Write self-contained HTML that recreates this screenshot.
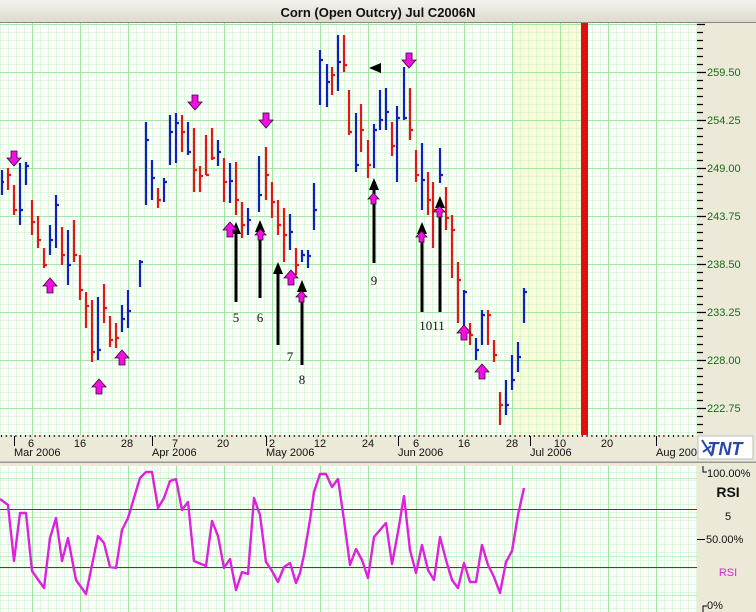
<!DOCTYPE html>
<html><head><meta charset="utf-8"><style>
html,body{margin:0;padding:0;background:#ece9d8;}
svg{display:block;font-family:"Liberation Sans",sans-serif;}
</style></head><body>
<svg width="756" height="612" viewBox="0 0 756 612" xmlns="http://www.w3.org/2000/svg">
<defs>
<linearGradient id="tb" x1="0" y1="0" x2="0" y2="1"><stop offset="0" stop-color="#f4f3ee"/><stop offset="1" stop-color="#dcd9cc"/></linearGradient>
<pattern id="minor" x="0" y="0" width="8" height="8" patternUnits="userSpaceOnUse"><path d="M0 0H8M0 0V8" stroke="#c4efc4" stroke-width="1" fill="none"/></pattern>
<pattern id="major" x="32.5" y="24.5" width="48" height="48" patternUnits="userSpaceOnUse"><path d="M0 0H48M0 0V48" stroke="#7fe07f" stroke-width="1" fill="none"/></pattern>
<pattern id="major2" x="32.5" y="517.5" width="48" height="39" patternUnits="userSpaceOnUse"><path d="M0 0H48M0 0V39" stroke="#7fe07f" stroke-width="1" fill="none"/></pattern>
<pattern id="ticks" x="1" y="0" width="4.8" height="3" patternUnits="userSpaceOnUse"><rect width="1" height="2" fill="#000"/></pattern>
</defs>
<!-- title -->
<rect x="0" y="0" width="756" height="23" fill="url(#tb)"/>
<line x1="0" y1="22.5" x2="756" y2="22.5" stroke="#888"/>
<text x="378" y="17" text-anchor="middle" font-size="13" font-weight="bold" fill="#111">Corn (Open Outcry) Jul C2006N</text>
<!-- main chart -->
<rect x="0" y="23" width="697" height="412" fill="#fafffa"/>
<rect x="513" y="23" width="69" height="412" fill="#f8fcd8"/>
<rect x="0" y="23" width="697" height="412" fill="url(#minor)"/>
<rect x="0" y="23" width="697" height="412" fill="url(#major)"/>
<rect x="581" y="23" width="7" height="412" fill="#e01010"/>
<!-- right axis -->
<rect x="697" y="23" width="59" height="412" fill="#ece9d8"/>
<g stroke="#000" stroke-width="1.2">
<path d="M697 24.5h8M697 32.5h6M697 40.5h6M697 48.5h6M697 56.5h6M697 64.5h6M697 72.5h9M697 80.5h6M697 88.5h6M697 96.5h6M697 104.5h6M697 112.5h6M697 120.5h9M697 128.5h6M697 136.5h6M697 144.5h6M697 152.5h6M697 160.5h6M697 168.5h9M697 176.5h6M697 184.5h6M697 192.5h6M697 200.5h6M697 208.5h6M697 216.5h9M697 224.5h6M697 232.5h6M697 240.5h6M697 248.5h6M697 256.5h6M697 264.5h9M697 272.5h6M697 280.5h6M697 288.5h6M697 296.5h6M697 304.5h6M697 312.5h9M697 320.5h6M697 328.5h6M697 336.5h6M697 344.5h6M697 352.5h6M697 360.5h9M697 368.5h6M697 376.5h6M697 384.5h6M697 392.5h6M697 400.5h6M697 408.5h9M697 416.5h6M697 424.5h6M697 432.5h6"/>
</g>
<g font-size="11" fill="#1a6a1a">
<text x="707" y="76">259.50</text><text x="707" y="124">254.25</text><text x="707" y="172">249.00</text><text x="707" y="220">243.75</text><text x="707" y="268">238.50</text><text x="707" y="316">233.25</text><text x="707" y="364">228.00</text><text x="707" y="412">222.75</text>
</g>
<!-- bars -->
<g stroke-width="2.2" fill="none">
<g stroke="#1020c0">
<path d="M2 170V195M1 182h3M20 163V225M20 210h3M26 162V185M26 166h3M50 225V255M50 240h3M56 195V248M56 205h3M68 230V285M68 265h3M98 297V360M98 350h3M122 305V332M122 319h3M128 290V328M128 311h3M140 260V287M140 262h3M146 122V205M146 140h3M152 160V200M152 178h3M164 178V202M164 182h3M170 115V165M170 132h3M176 113V163M176 123h3M188 122V155M188 152h3M218 140V166M218 152h3M230 163V203M230 181h3M248 208V235M248 220h3M259 156V212M259 195h3M290 214V250M290 232h3M302 250V262M302 255h3M308 250V268M308 256h3M314 183V230M314 210h3M320 50V105M320 60h3M327 64V107M327 82h3M338 35V91M338 62h3M356 113V172M356 165h3M374 124V168M374 130h3M380 90V130M380 120h3M386 88V130M386 112h3M397 106V182M397 118h3M404 67V120M404 118h3M422 143V210M422 180h3M440 148V183M440 175h3M464 290V330M464 292h3M476 338V360M476 350h3M482 310V345M482 315h3M506 380V415M506 405h3M512 355V390M512 380h3M518 342V372M518 357h3M524 288V323M524 292h3"/>
</g>
<g stroke="#e01818">
<path d="M8 168V190M8 175h3M14 185V215M14 210h3M32 200V235M32 222h3M38 216V248M38 240h3M44 248V268M44 265h3M62 227V265M62 255h3M74 220V262M74 255h3M80 255V300M80 290h3M86 292V328M86 306h3M92 300V362M92 352h3M104 284V323M104 308h3M110 316V347M110 340h3M116 323V348M116 338h3M158 188V208M158 200h3M182 115V152M182 132h3M194 128V192M194 170h3M200 166V192M200 176h3M206 135V175M206 175h3M212 128V160M212 158h3M224 158V202M224 182h3M236 162V215M236 200h3M242 202V238M242 225h3M266 147V200M266 175h3M272 182V218M272 202h3M278 200V235M278 225h3M284 208V262M284 235h3M296 248V275M296 265h3M332 67V95M332 75h3M344 35V72M344 65h3M349 90V135M349 132h3M361 104V152M361 130h3M368 140V178M368 165h3M392 122V156M392 146h3M410 88V140M410 130h3M416 150V182M416 175h3M428 172V215M428 200h3M433 182V248M433 210h3M446 187V230M446 218h3M452 215V278M452 230h3M458 262V323M458 280h3M470 323V345M470 335h3M488 310V345M488 315h3M494 340V362M494 355h3M500 392V425M500 405h3"/>
</g>
</g>
<!-- black arrows -->
<g stroke="#000" stroke-width="3" fill="#000">
<line x1="236" y1="232" x2="236" y2="302"/><line x1="260" y1="230" x2="260" y2="298"/><line x1="278" y1="272" x2="278" y2="345"/><line x1="302" y1="290" x2="302" y2="365"/><line x1="374" y1="188" x2="374" y2="263"/><line x1="422" y1="232" x2="422" y2="312"/><line x1="440" y1="205" x2="440" y2="312"/>
</g>
<g fill="#000">
<path d="M236 222l-5 12h10z"/><path d="M260 220l-5 12h10z"/><path d="M278 262l-5 12h10z"/><path d="M302 280l-5 12h10z"/><path d="M374 178l-5 12h10z"/><path d="M422 222l-5 12h10z"/><path d="M440 196l-5 12h10z"/>
<path d="M369 68l12-5v10z"/>
</g>
<g font-family="Liberation Serif,serif" font-size="13" fill="#111" text-anchor="middle">
<text x="236" y="322">5</text><text x="260" y="322">6</text><text x="290" y="361">7</text><text x="302" y="384">8</text><text x="374" y="285">9</text><text x="432" y="330">1011</text>
</g>
<!-- magenta arrows -->
<g fill="#f010e0" stroke="#400040" stroke-width="0.8">
<path d="M11 151h6v7h4l-7 8l-7-8h4z"/><path d="M192 95h6v7h4l-7 8l-7-8h4z"/><path d="M263 113h6v7h4l-7 8l-7-8h4z"/><path d="M406 53h6v7h4l-7 8l-7-8h4z"/>
<path d="M47 293h6v-7h4l-7-8l-7 8h4z"/><path d="M96 394h6v-7h4l-7-8l-7 8h4z"/><path d="M119 365h6v-7h4l-7-8l-7 8h4z"/><path d="M227 237h6v-7h4l-7-8l-7 8h4z"/><path d="M288 285h6v-7h4l-7-8l-7 8h4z"/><path d="M461 340h6v-7h4l-7-8l-7 8h4z"/><path d="M479 379h6v-7h4l-7-8l-7 8h4z"/>
<path d="M258 240h5v-5h3l-5.5-6l-5.5 6h3z"/><path d="M299 302h5v-5h3l-5.5-6l-5.5 6h3z"/><path d="M371 204h5v-5h3l-5.5-6l-5.5 6h3z"/><path d="M419 242h5v-5h3l-5.5-6l-5.5 6h3z"/><path d="M437 217h5v-5h3l-5.5-6l-5.5 6h3z"/>
</g>
<!-- date axis -->
<rect x="0" y="435" width="756" height="27" fill="#ece9d8"/>
<rect x="0" y="435" width="697" height="3" fill="url(#ticks)"/>
<line x1="0" y1="462.5" x2="756" y2="462.5" stroke="#999" stroke-width="2"/>
<rect x="0" y="463" width="756" height="3" fill="#ece9d8"/>
<g stroke="#000" stroke-width="1"><path d="M14.5 436v10M152.5 436v10M266.5 436v10M398.5 436v10M530.5 436v10M656.5 436v10"/></g>
<g font-size="11" fill="#111" text-anchor="middle">
<text x="31" y="447">6</text><text x="80" y="447">16</text><text x="127" y="447">28</text><text x="175" y="447">7</text><text x="223" y="447">20</text><text x="272" y="447">2</text><text x="320" y="447">12</text><text x="368" y="447">24</text><text x="416" y="447">6</text><text x="464" y="447">16</text><text x="512" y="447">28</text><text x="560" y="447">10</text><text x="607" y="447">20</text>
</g>
<g font-size="11" fill="#111">
<text x="14" y="456">Mar 2006</text><text x="152" y="456">Apr 2006</text><text x="266" y="456">May 2006</text><text x="398" y="456">Jun 2006</text><text x="530" y="456">Jul 2006</text><text x="656" y="456">Aug 2006</text>
</g>
<rect x="698" y="436" width="55" height="23" fill="#fff" stroke="#bbb"/>
<text x="725" y="455" text-anchor="middle" font-size="18" font-weight="bold" font-style="italic" fill="#2848a8">TNT</text>
<path d="M702 440l10 16M703 452l8-6" stroke="#2848a8" stroke-width="2"/>
<!-- RSI panel -->
<rect x="0" y="466" width="697" height="146" fill="#fafffa"/>
<rect x="0" y="466" width="697" height="146" fill="url(#minor)"/>
<rect x="0" y="466" width="697" height="146" fill="url(#major2)"/>
<line x1="0" y1="509.5" x2="697" y2="509.5" stroke="#c01010"/>
<line x1="0" y1="567.5" x2="697" y2="567.5" stroke="#c01010"/>
<rect x="697" y="466" width="59" height="146" fill="#ece9d8"/>
<path d="M703 466v6h4M697 539.5h8M703 612v-6h4" stroke="#000" fill="none"/>
<g font-size="11" fill="#111">
<text x="707" y="477">100.00%</text><text x="706" y="543">50.00%</text><text x="707" y="609">0%</text>
<text x="728" y="520" text-anchor="middle">5</text>
</g>
<text x="728" y="497" text-anchor="middle" font-size="14" font-weight="bold" fill="#111">RSI</text>
<text x="728" y="576" text-anchor="middle" font-size="11" fill="#e020e0">RSI</text>
<polyline fill="none" stroke="#e020e0" stroke-width="2.4" stroke-linejoin="round" points="0,499 8,505 14,561 20,513 26,513 32,571 44,588 50,538 56,518 62,561 68,538 76,580 86,594 98,536 104,543 110,567 116,568 122,530 128,518 134,498 140,478 146,472 152,472 158,508 164,498 170,481 176,479 182,510 188,502 194,561 206,566 212,521 218,536 224,568 230,559 236,590 242,572 248,574 254,498 260,515 266,562 272,571 278,582 284,567 290,563 296,583 300,573 304,555 310,520 314,492 320,474 326,474 332,487 338,479 344,520 350,565 356,549 362,560 368,578 374,537 380,530 386,523 392,564 398,532 404,496 410,550 416,573 422,545 428,570 434,580 440,537 446,560 452,580 458,588 464,563 470,582 476,582 482,545 488,565 494,577 500,593 506,562 512,551 518,515 524,488"/>
</svg>
</body></html>
